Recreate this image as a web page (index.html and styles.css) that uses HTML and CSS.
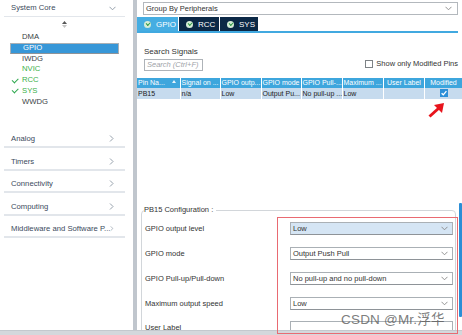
FILE: index.html
```html
<!DOCTYPE html>
<html lang="en">
<head>
    <meta charset="UTF-8">
    <title>Pinout &amp; Configuration</title>
    <link rel="stylesheet" href="styles.css">
</head>
<body>
    <div class="app">
        <aside class="sidebar">
            <div class="cat cat-open">
                <span>System Core</span>
                <svg class="chev" width="7" height="5" viewBox="0 0 7 5"><polyline points="0.5,0.8 3.5,3.8 6.5,0.8" fill="none" stroke="#8a96a3" stroke-width="0.9"/></svg>
            </div>
            <div class="sort">
                <svg width="5" height="7" viewBox="0 0 5 7"><polygon points="2.5,0 5,3 0,3" fill="#555"/><polygon points="0,4 5,4 2.5,7" fill="#c4c4c4"/></svg>
            </div>
            <ul class="periph">
                <li>DMA</li>
                <li class="sel">GPIO</li>
                <li>IWDG</li>
                <li class="ok">NVIC</li>
                <li class="ok done">RCC</li>
                <li class="ok done">SYS</li>
                <li>WWDG</li>
            </ul>
            <div class="cat first"><span>Analog</span><svg class="arrow" width="5" height="7" viewBox="0 0 5 7"><polyline points="1,0.5 4,3.5 1,6.5" fill="none" stroke="#8a96a3" stroke-width="0.9"/></svg></div>
            <div class="cat"><span>Timers</span><svg class="arrow" width="5" height="7" viewBox="0 0 5 7"><polyline points="1,0.5 4,3.5 1,6.5" fill="none" stroke="#8a96a3" stroke-width="0.9"/></svg></div>
            <div class="cat"><span>Connectivity</span><svg class="arrow" width="5" height="7" viewBox="0 0 5 7"><polyline points="1,0.5 4,3.5 1,6.5" fill="none" stroke="#8a96a3" stroke-width="0.9"/></svg></div>
            <div class="cat"><span>Computing</span><svg class="arrow" width="5" height="7" viewBox="0 0 5 7"><polyline points="1,0.5 4,3.5 1,6.5" fill="none" stroke="#8a96a3" stroke-width="0.9"/></svg></div>
            <div class="cat"><span>Middleware and Software P...</span><svg class="arrow" width="5" height="7" viewBox="0 0 5 7"><polyline points="1,0.5 4,3.5 1,6.5" fill="none" stroke="#8a96a3" stroke-width="0.9"/></svg></div>
        </aside>

        <div class="divider"></div>

        <main class="main">
            <div class="group-select">
                <span>Group By Peripherals</span>
                <svg width="7" height="5" viewBox="0 0 7 5"><polyline points="0.5,0.8 3.5,3.8 6.5,0.8" fill="none" stroke="#888" stroke-width="0.9"/></svg>
            </div>

            <div class="tabs">
                <div class="tab active"><span class="ico"></span>GPIO</div>
                <div class="tab"><span class="ico"></span>RCC</div>
                <div class="tab"><span class="ico"></span>SYS</div>
            </div>

            <div class="search-area">
                <div>
                    <div class="search-title">Search Signals</div>
                    <div class="search-box">Search (Ctrl+F)</div>
                </div>
                <div class="only-mod"><span class="cb"></span>Show only Modified Pins</div>
            </div>

            <table class="pins">
                <colgroup>
                    <col style="width:43px"><col style="width:40px"><col style="width:41px"><col style="width:40px">
                    <col style="width:41px"><col style="width:41px"><col style="width:41px"><col style="width:38px">
                </colgroup>
                <thead>
                    <tr>
                        <td class="sortable">Pin Na...<span class="sort-ic"></span></td>
                        <td>Signal on ...</td>
                        <td>GPIO outp...</td>
                        <td>GPIO mode</td>
                        <td>GPIO Pull-...</td>
                        <td>Maximum ...</td>
                        <td class="c">User Label</td>
                        <td class="c">Modified</td>
                    </tr>
                </thead>
                <tbody>
                    <tr>
                        <td>PB15</td>
                        <td>n/a</td>
                        <td>Low</td>
                        <td>Output Pu...</td>
                        <td>No pull-up ...</td>
                        <td>Low</td>
                        <td></td>
                        <td class="c"><span class="mod-cb"><svg width="8" height="8" viewBox="0 0 8 8"><polyline points="1.6,4.2 3.3,5.8 6.4,2.2" fill="none" stroke="#fff" stroke-width="1.3"/></svg></span></td>
                    </tr>
                </tbody>
            </table>

            <div class="config">
                <fieldset class="config-box">
                    <legend>PB15 Configuration :</legend>
                    <div class="row">
                        <span class="lbl">GPIO output level</span>
                        <div class="sel focus"><span>Low</span><svg width="7" height="5" viewBox="0 0 7 5"><polyline points="0.5,0.8 3.5,3.8 6.5,0.8" fill="none" stroke="#888" stroke-width="0.9"/></svg></div>
                    </div>
                    <div class="row">
                        <span class="lbl">GPIO mode</span>
                        <div class="sel"><span>Output Push Pull</span><svg width="7" height="5" viewBox="0 0 7 5"><polyline points="0.5,0.8 3.5,3.8 6.5,0.8" fill="none" stroke="#888" stroke-width="0.9"/></svg></div>
                    </div>
                    <div class="row">
                        <span class="lbl">GPIO Pull-up/Pull-down</span>
                        <div class="sel"><span>No pull-up and no pull-down</span><svg width="7" height="5" viewBox="0 0 7 5"><polyline points="0.5,0.8 3.5,3.8 6.5,0.8" fill="none" stroke="#888" stroke-width="0.9"/></svg></div>
                    </div>
                    <div class="row">
                        <span class="lbl">Maximum output speed</span>
                        <div class="sel"><span>Low</span><svg width="7" height="5" viewBox="0 0 7 5"><polyline points="0.5,0.8 3.5,3.8 6.5,0.8" fill="none" stroke="#888" stroke-width="0.9"/></svg></div>
                    </div>
                    <div class="row last">
                        <span class="lbl">User Label</span>
                        <div class="sel text"></div>
                    </div>
                </fieldset>
                <div class="scroll-thumb"></div>
            </div>
        </main>
    </div>
    <div class="statusbar"></div>

    <!-- marcacoes por cima do print -->
    <div class="red-box"></div>
    <svg class="red-arrow" width="18" height="16" viewBox="0 0 18 16">
        <line x1="1.5" y1="14.5" x2="11" y2="6" stroke="#e8141c" stroke-width="3"/>
        <polygon points="16,1 6,3 14,11" fill="#e8141c"/>
    </svg>
    <div class="watermark">CSDN @Mr.浮华</div>
</body>
</html>
```

FILE: styles.css
```css
* {
    box-sizing: border-box;
}

body {
    margin: 0;
    width: 462px;
    height: 335px;
    overflow: hidden;
    position: relative;
    background-color: #fff;
    font-family: "Liberation Sans", Arial, sans-serif;
    font-size: 7.5px;
    color: #333;
}

.app {
    display: flex;
    height: 330px;
}

/* coluna da esquerda */
.sidebar {
    width: 133px;
    flex-shrink: 0;
    color: #3b4a5c;
    font-size: 7.7px;
}

.cat {
    display: flex;
    align-items: flex-end;
    justify-content: space-between;
    height: 22.5px;
    margin: 0 8px 0 4px;
    padding: 0 11px 2px 7px;
    border-bottom: 2px solid #e2e6eb;
    line-height: 10px;
    white-space: nowrap;
}

.cat .arrow {
    margin-bottom: 2px;
}

.cat-open {
    height: 17px;
    align-items: center;
    padding: 0 9px 0 7px;
    border-bottom: 1.5px solid #e2e6eb;
}

.cat.first {
    margin-top: 18px;
}

.sort {
    display: flex;
    justify-content: center;
    height: 15px;
    align-items: center;
    padding-right: 4px;
}

.periph {
    list-style: none;
    margin: 0;
    padding: 0;
}

.periph li {
    position: relative;
    height: 10.8px;
    line-height: 10.8px;
    margin-left: 10px;
    width: 109px;
    padding-left: 12px;
    color: #3a3f45;
}

.periph li.sel {
    background-color: #3797d8;
    color: #fff;
}

.periph li.ok {
    color: #3bb04a;
}

.periph li.done::before {
    content: "";
    position: absolute;
    left: 2px;
    top: 2.5px;
    width: 5px;
    height: 2.5px;
    border-left: 1.6px solid #2fa84f;
    border-bottom: 1.6px solid #2fa84f;
    transform: rotate(-45deg);
}

.divider {
    width: 4px;
    flex-shrink: 0;
    background-color: #c0c6cd;
}

/* painel principal */
.main {
    flex: 1;
    min-width: 0;
    overflow: hidden;
}

.group-select {
    display: flex;
    align-items: center;
    justify-content: space-between;
    height: 13px;
    margin: 2px 4px 0 6px;
    padding: 0 5px 0 2px;
    border: 1px solid #b3b8bd;
}

.tabs {
    display: flex;
    margin-top: 2px;
    height: 14px;
}

.tab {
    display: flex;
    align-items: center;
    gap: 5px;
    padding-left: 7px;
    width: 40px;
    margin-right: 1px;
    background-color: #0b2846;
    color: #fff;
    font-size: 8px;
}

.tab.active {
    width: 41px;
    background-color: #45ade2;
}

.tab:nth-child(3) {
    width: 38px;
}

.ico {
    position: relative;
    width: 7px;
    height: 7px;
    border-radius: 50%;
    background-color: #d5ecd6;
}

.ico::after {
    content: "";
    position: absolute;
    left: 1.6px;
    top: 1.4px;
    width: 3px;
    height: 1.6px;
    border-left: 1.2px solid #2e9b45;
    border-bottom: 1.2px solid #2e9b45;
    transform: rotate(-45deg);
}

.search-area {
    display: flex;
    justify-content: space-between;
    align-items: flex-start;
    height: 47px;
    margin-right: 4px;
    border-top: 2px solid #41a9e0;
    padding-top: 13px;
}

.search-title {
    margin-left: 7px;
    font-size: 8px;
    line-height: 11px;
}

.search-box {
    margin: 2px 0 0 7px;
    width: 59px;
    height: 12px;
    padding-left: 2px;
    border: 1px solid #aeb3b8;
    color: #9ea3a8;
    font-style: italic;
    line-height: 10px;
    white-space: nowrap;
}

.only-mod {
    display: flex;
    align-items: center;
    gap: 3px;
    margin-top: 13px;
    white-space: nowrap;
    color: #333;
}

.cb {
    width: 8px;
    height: 8px;
    border: 1px solid #7d8286;
    background-color: #fff;
}

/* tabela */
.pins {
    width: 325px;
    table-layout: fixed;
    border-collapse: collapse;
    font-size: 7px;
}

.pins td {
    padding: 0 0 0 1px;
    border-right: 1px solid #fff;
    overflow: hidden;
    white-space: nowrap;
}

.pins td.c {
    text-align: center;
}

.pins thead td {
    height: 10px;
    line-height: 10px;
    background-color: #3ea6dd;
    color: #fff;
}

.pins tbody td {
    height: 11px;
    line-height: 11px;
    background-color: #c6dbee;
    color: #222;
}

.sortable {
    position: relative;
}

.sort-ic {
    position: absolute;
    right: 4px;
    top: 2px;
    width: 0;
    height: 0;
    border-left: 2.5px solid transparent;
    border-right: 2.5px solid transparent;
    border-bottom: 3px solid #e8f4fb;
}

.mod-cb {
    display: inline-flex;
    vertical-align: middle;
    width: 8px;
    height: 8px;
    background-color: #2b8fd8;
    margin-top: -2px;
}

/* configuracao */
.config {
    display: flex;
    align-items: flex-start;
    gap: 3px;
    margin-top: 106px;
}

.config-box {
    flex: 1;
    margin: 0 0 0 4px;
    padding: 1.5px 0 0 3px;
    height: 140px;
    border: 1px solid #d2d6da;
    border-radius: 4px;
    min-width: 0;
}

.config-box legend {
    padding: 0 3px 0 0;
    margin-left: -1px;
    line-height: 10px;
    color: #333;
}

.row {
    display: flex;
    align-items: center;
    height: 24.8px;
}

.row.last {
    align-items: flex-start;
    padding-top: 5px;
}

.row.last .lbl {
    margin-top: 2px;
}

.lbl {
    width: 145px;
    flex-shrink: 0;
    color: #333;
}

.sel {
    display: flex;
    align-items: center;
    justify-content: space-between;
    width: 163px;
    height: 13px;
    padding: 0 4px 0 2px;
    border: 1px solid #aab0b5;
    border-bottom-color: #8e9398;
    background-color: #fff;
    color: #333;
}

.sel.focus {
    background-color: #d5e5f4;
}

.sel.text {
    height: 14px;
}

.scroll-thumb {
    width: 3px;
    height: 114px;
    margin-top: -2px;
    background-color: #2b8ed6;
    border-radius: 1px;
}

.statusbar {
    height: 5px;
    background-color: #d4d8dc;
    border-top: 1px solid #c4c9ce;
}

/* anotacoes do print */
.red-box {
    position: absolute;
    left: 277px;
    top: 217px;
    width: 181px;
    height: 117px;
    border: 1px solid #e96a72;
}

.red-arrow {
    position: absolute;
    left: 428px;
    top: 102px;
}

.watermark {
    position: absolute;
    left: 341px;
    top: 308px;
    font-family: "Liberation Sans", "Noto Sans CJK SC", sans-serif;
    font-size: 13.5px;
    color: rgba(90, 90, 90, 0.8);
    letter-spacing: 0.2px;
}
```
